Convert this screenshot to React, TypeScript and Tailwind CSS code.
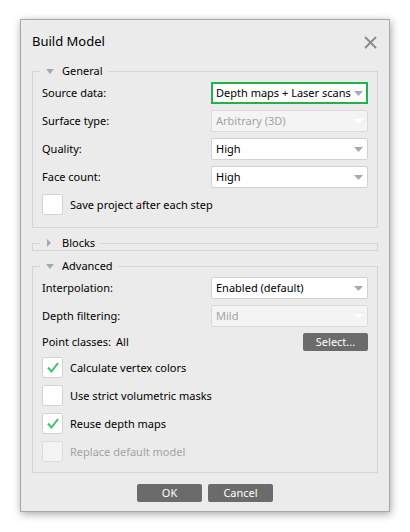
import type { ReactNode } from 'react';

const FONT = { fontFamily: '"Segoe UI", "Noto Sans", "Open Sans", sans-serif' };

function Arrow({ disabled }: { disabled?: boolean }) {
  return (
    <svg width="9" height="5" viewBox="0 0 9 5" className="shrink-0">
      <path d="M0 0 L9 0 L4.5 5 Z" fill={disabled ? '#ffffff' : '#a9a9a9'} />
    </svg>
  );
}

type SelectProps = { value: string; disabled?: boolean; highlight?: boolean };

function Select({ value, disabled, highlight }: SelectProps) {
  const box = highlight
    ? 'border-2 border-[#22b14c] bg-white pl-[3px] pr-[3px]'
    : disabled
      ? 'border border-[#dadada] bg-[#f4f4f4] rounded-[2px] pl-[4px] pr-[4px]'
      : 'border border-[#d2d2d2] bg-white rounded-[2px] pl-[4px] pr-[4px]';
  return (
    <div className={`flex h-[22px] w-[157px] items-center justify-between whitespace-nowrap ${box}`}>
      <span className={disabled ? 'text-[#a3a3a3]' : 'text-black'}>{value}</span>
      <Arrow disabled={disabled} />
    </div>
  );
}

function Row({ label, children }: { label: string; children: ReactNode }) {
  return (
    <div className="flex h-[22px] items-center justify-between">
      <span>{label}</span>
      {children}
    </div>
  );
}

function Check({ label, checked, disabled }: { label: string; checked?: boolean; disabled?: boolean }) {
  return (
    <div className="flex h-[22px] items-start gap-[7px]">
      <div
        className={`flex h-[21px] w-[21px] items-center justify-center rounded-[2px] border ${
          disabled ? 'border-[#dcdcdc] bg-[#f3f3f3]' : 'border-[#d3d3d3] bg-white'
        }`}
      >
        {checked && (
          <svg width="12" height="11" viewBox="0 0 12 11">
            <path d="M1 5.5 L4.5 9.5 L11 1" fill="none" stroke="#3cc46c" strokeWidth="2" />
          </svg>
        )}
      </div>
      <span className={`leading-[21px] ${disabled ? 'text-[#a3a3a3]' : 'text-black'}`}>{label}</span>
    </div>
  );
}

function Group({ title, open = true, children }: { title: string; open?: boolean; children?: ReactNode }) {
  return (
    <fieldset className="mx-[11px] border border-[#d6d6d6] px-[9px]">
      <legend className="-ml-[2px] flex h-[14px] items-center pr-[5px] pl-[6px]">
        {open ? (
          <svg width="8" height="5" viewBox="0 0 8 5" className="mr-[8px]">
            <path d="M0 0 L8 0 L4 5 Z" fill="#a9a9a9" />
          </svg>
        ) : (
          <svg width="8" height="8" viewBox="0 0 8 8" className="mr-[8px]">
            <path d="M1 0 L5 4 L1 8 Z" fill="#a9a9a9" />
          </svg>
        )}
        <span className="text-black">{title}</span>
      </legend>
      {children}
    </fieldset>
  );
}

export default function App() {
  return (
    <div className="h-[532px] w-[410px] bg-white pt-[19px] pl-[20px]" style={FONT}>
      <div className="flex h-[493px] w-[370px] flex-col border border-[#a8a8a8] bg-[#ebebeb] text-[11px] text-black shadow-[1px_2px_8px_rgba(0,0,0,0.35)]">
        <div className="flex h-[44px] shrink-0 items-center justify-between pr-[12px] pl-[11px]">
          <span className="text-[13px] text-black">Build Model</span>
          <svg width="13" height="13" viewBox="0 0 13 13">
            <path d="M1 1 L12 12 M12 1 L1 12" stroke="#8a8a8a" strokeWidth="1.8" />
          </svg>
        </div>

        <Group title="General">
          <div className="flex flex-col gap-[6px] pt-[4px] pb-[11px]">
            <Row label="Source data:">
              <Select value="Depth maps + Laser scans" highlight />
            </Row>
            <Row label="Surface type:">
              <Select value="Arbitrary (3D)" disabled />
            </Row>
            <Row label="Quality:">
              <Select value="High" />
            </Row>
            <Row label="Face count:">
              <Select value="High" />
            </Row>
            <Check label="Save project after each step" />
          </div>
        </Group>

        <div className="mt-[8px]">
          <Group title="Blocks" open={false} />
        </div>

        <div className="mt-[8px]">
          <Group title="Advanced">
            <div className="flex flex-col gap-[6px] pt-[4px] pb-[9px]">
              <Row label="Interpolation:">
                <Select value="Enabled (default)" />
              </Row>
              <Row label="Depth filtering:">
                <Select value="Mild" disabled />
              </Row>
              <div className="flex h-[18px] items-center justify-between">
                <span>
                  Point classes:<span className="ml-[5px]">All</span>
                </span>
                <button className="h-[18px] w-[65px] rounded-[2px] bg-[#6b6b6b] text-[11px] leading-[18px] text-white">
                  Select...
                </button>
              </div>
              <Check label="Calculate vertex colors" checked />
              <Check label="Use strict volumetric masks" />
              <Check label="Reuse depth maps" checked />
              <Check label="Replace default model" disabled />
            </div>
          </Group>
        </div>

        <div className="mt-[11px] flex justify-center gap-[6px]">
          <button className="h-[18px] w-[65px] rounded-[2px] bg-[#6b6b6b] text-[11px] leading-[18px] text-white">OK</button>
          <button className="h-[18px] w-[65px] rounded-[2px] bg-[#6b6b6b] text-[11px] leading-[18px] text-white">Cancel</button>
        </div>
      </div>
    </div>
  );
}
